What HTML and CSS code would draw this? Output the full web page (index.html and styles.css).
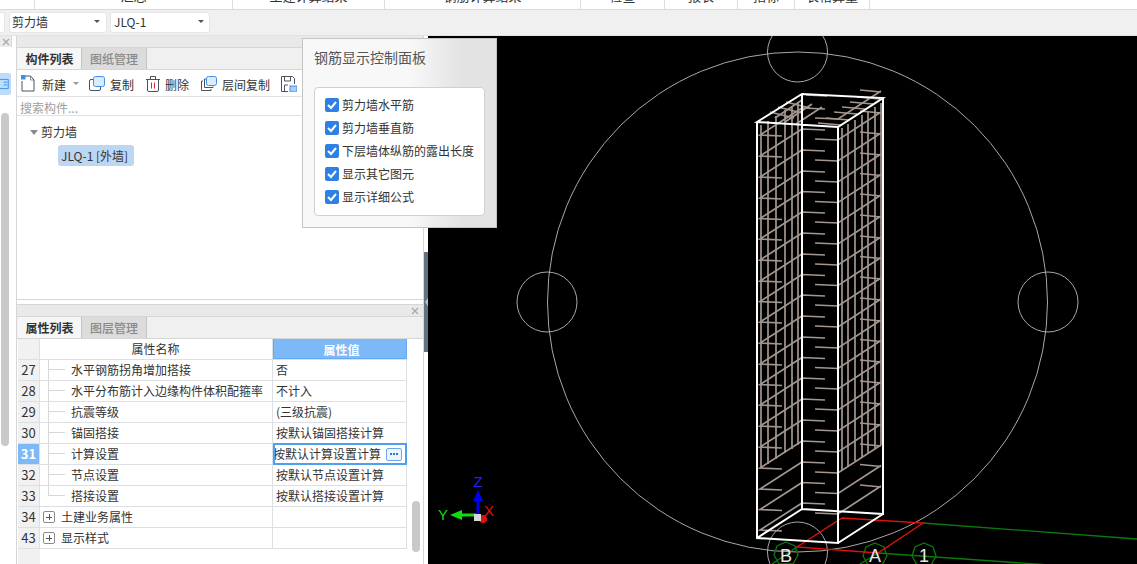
FILE: index.html
```html
<!DOCTYPE html>
<html lang="zh">
<head>
<meta charset="utf-8">
<title>钢筋显示控制面板</title>
<link rel="stylesheet" href="styles.css">
</head>
<body>
<div class="app">
  <div class="ribbon">
    <div class="rb w1"><span>汇总</span></div>
    <div class="rb w2"><span>土建计算结果</span></div>
    <div class="rb w3"><span>钢筋计算结果</span></div>
    <div class="rb w4"><span>检查</span></div>
    <div class="rb w5"><span>报表</span></div>
    <div class="rb w6"><span>指标</span></div>
    <div class="rb w7"><span>表格算量</span></div>
  </div>
  <div class="toolbar">
    <div class="sel sel-stub"></div>
    <div class="sel"><span>剪力墙</span><i class="caret"></i></div>
    <div class="sel"><span>JLQ-1</span><i class="caret"></i></div>
  </div>
  <div class="main">
    <aside class="side">
      <div class="side-head"><svg class="x" viewBox="0 0 8 8"><path d="M1 1l6 6M7 1L1 7"/></svg></div>
      <div class="side-tile"><svg viewBox="0 0 12 14" width="12" height="14"><path d="M-2 2h11v10H-2M4 5h4M4 8h4" fill="none" stroke="#3b8de0"/></svg></div>
      <div class="side-thumb"></div>
    </aside>
    <div class="panels">
      <section class="panel p1">
        <div class="phead"></div>
        <div class="tabs"><div class="tab on">构件列表</div><div class="tab">图纸管理</div></div>
        <div class="tools">
          <div class="tool t-new">
            <svg width="15" height="17" viewBox="0 0 15 17"><path d="M1 6v10h12V5L9.500 1H4" fill="none" stroke="#4a5260"/><path d="M9.500 1v4H13" fill="none" stroke="#4a5260" stroke-width=".6"/><rect x="0" y="0" width="4.500" height="4.500" fill="#3f8fe8"/></svg>
            <span>新建</span><i class="caret gray"></i>
          </div>
          <div class="tool t-copy">
            <svg width="16" height="15" viewBox="0 0 16 15"><rect x="4.500" y=".5" width="11" height="10" rx="2" fill="#dcebfb" stroke="#3f8fe8"/><path d="M4 3.500H2a1.500 1.500 0 0 0-1.500 1.500v8a1.500 1.500 0 0 0 1.500 1.500h8a1.500 1.500 0 0 0 1.500-1.500v-2" fill="none" stroke="#4a5260"/></svg>
            <span>复制</span>
          </div>
          <div class="tool t-del">
            <svg width="14" height="16" viewBox="0 0 14 16"><path d="M0 3.500h14M4.500 3V.5h5V3M1.500 4v10a1.500 1.500 0 0 0 1.500 1.500h8a1.500 1.500 0 0 0 1.500-1.500V4" fill="none" stroke="#4a5260"/><path d="M5.500 6.500v6M8.500 6.500v6" stroke="#d42a2a"/></svg>
            <span>删除</span>
          </div>
          <div class="tool t-layer">
            <svg width="16" height="15" viewBox="0 0 16 15"><rect x="5.500" y=".5" width="10" height="9" rx="2" fill="#dcebfb" stroke="#3f8fe8"/><path d="M5 3H3.500v8.500H12V10.500M2 5H.5v9.500H10V13" fill="none" stroke="#4a5260"/></svg>
            <span>层间复制</span>
          </div>
          <div class="tool">
            <svg width="16" height="16" viewBox="0 0 16 16"><path d="M7 15.500H.5V.5h11l2 2V8" fill="none" stroke="#4a5260"/><path d="M3.500 1v4h6V1M3.500 15V9H7" fill="none" stroke="#4a5260"/><rect x="9" y="10" width="7" height="6" fill="#a9cdf3" stroke="#3f8fe8"/></svg>
          </div>
        </div>
        <div class="search">搜索构件...</div>
        <div class="tree">
          <div class="tree-top"><i class="tri"></i>剪力墙</div>
          <div class="tree-leaf"><span class="pill">JLQ-1 [外墙]</span></div>
        </div>
      </section>
      <section class="panel p2">
        <div class="phead"><svg class="x" viewBox="0 0 8 8"><path d="M1 1l6 6M7 1L1 7"/></svg></div>
        <div class="tabs"><div class="tab on">属性列表</div><div class="tab">图层管理</div></div>
        <div class="tbl-wrap">
          <div class="tbl">
            <div class="row head"><div class="num"></div><div class="name">属性名称</div><div class="val">属性值</div></div>
            <div class="row"><div class="num">27</div><div class="name sub">水平钢筋拐角增加搭接</div><div class="val">否</div></div>
            <div class="row"><div class="num">28</div><div class="name sub">水平分布筋计入边缘构件体积配箍率</div><div class="val">不计入</div></div>
            <div class="row"><div class="num">29</div><div class="name sub">抗震等级</div><div class="val">(三级抗震)</div></div>
            <div class="row"><div class="num">30</div><div class="name sub">锚固搭接</div><div class="val">按默认锚固搭接计算</div></div>
            <div class="row cur"><div class="num">31</div><div class="name sub">计算设置</div><div class="val"><span class="clip"><span>按默认计算设置计算</span></span><b class="more"><i></i><i></i><i></i></b></div></div>
            <div class="row"><div class="num">32</div><div class="name sub">节点设置</div><div class="val">按默认节点设置计算</div></div>
            <div class="row"><div class="num">33</div><div class="name sub last">搭接设置</div><div class="val">按默认搭接设置计算</div></div>
            <div class="row"><div class="num">34</div><div class="name grp"><i class="plus"></i>土建业务属性</div><div class="val"></div></div>
            <div class="row"><div class="num">43</div><div class="name grp"><i class="plus"></i>显示样式</div><div class="val"></div></div>
            <div class="tbl-foot"></div>
          </div>
          <div class="vbar"><div class="vthumb"></div></div>
        </div>
      </section>
    </div>
    <div class="gutter"><div class="grip"><i></i></div></div>
    <div class="view">
      <svg class="cad" width="709" height="528" viewBox="428 36 709 528">
        <defs>
          <g id="lvl">
            <path d="M802 0L825 1M802 0L760 27L782 28M815 10L838 11L881 -17M860 -18L881 -16"/>
          </g>
        </defs>
        <g fill="none" stroke="#a8a8a8" stroke-width="1">
          <circle cx="797.500" cy="302" r="250"/>
          <circle cx="547" cy="302" r="30"/>
          <circle cx="1048" cy="302" r="30"/>
          <circle cx="797.500" cy="52" r="30"/>
          <circle cx="797.500" cy="552" r="30"/>
        </g>
        <g fill="none" stroke="#0b7a0b" stroke-width="1.300">
          <path d="M923 523L1137 539M878 553L1137 571M860 564L878 553M772 564L797 547"/>
          <polygon points="786,542 795,546 798,555 793,564 779,564 774,555 777,546"/>
          <polygon points="875,543 884,547 887,556 882,565 868,565 863,556 866,547"/>
          <polygon points="924,543 933,547 936,556 931,565 917,565 912,556 915,547"/>
        </g>
        <path d="M842 518L923 523L878 553L797 547Z" fill="none" stroke="#e01010" stroke-width="1.300"/>
        <g fill="#e8e8e8" font-family="'Liberation Sans',sans-serif" font-size="18" text-anchor="middle">
          <text x="786" y="562">B</text>
          <text x="875" y="562">A</text>
          <text x="924" y="562">1</text>
        </g>
        <g fill="none" stroke="#a3968e" stroke-width="1.700">
          <path d="M761 125V468M768 121V464M776 116V459M785 110V453M792 106V449M798 103V445"/>
          <path d="M842 128V470M848 124V466M855 120V461M862 115V457M868 111V453M875 107V449M881 103V445"/>
          <use href="#lvl" y="108"/><use href="#lvl" y="129"/><use href="#lvl" y="150"/><use href="#lvl" y="171"/>
          <use href="#lvl" y="191.500"/><use href="#lvl" y="212"/><use href="#lvl" y="233"/><use href="#lvl" y="254"/>
          <use href="#lvl" y="274.500"/><use href="#lvl" y="295"/><use href="#lvl" y="316"/><use href="#lvl" y="337"/>
          <use href="#lvl" y="357.500"/><use href="#lvl" y="378"/><use href="#lvl" y="399"/><use href="#lvl" y="420"/>
          <use href="#lvl" y="441"/><use href="#lvl" y="462"/><use href="#lvl" y="482.500"/><use href="#lvl" y="503"/>
          <path d="M806 95L827 96M857 97L880 99M850 102L873 104M842 107L865 109M834 112L857 114M826 118L849 120M818 123L841 125"/>
          <path d="M775 118L802 100M785 122L812 104M796 124L822 107M770 112L794 118M778 107L802 113M786 102L810 108"/>
        </g>
        <path d="M757 122L802 94L883 98L838 127ZM757 122V538L838 543V127M802 94V509L883 514V98M757 538L802 509M838 543L883 514M802 509L883 514" fill="none" stroke="#fff" stroke-width="2"/>
        <g>
          <path d="M476.500 500H479.500V514H476.500Z" fill="#0000ee"/>
          <path d="M478 490L483 501H473Z" fill="#0000ee"/>
          <path d="M462 513.500H476V516.500H462Z" fill="#10dd10"/>
          <path d="M450 515L462 510V520Z" fill="#10dd10"/>
          <circle cx="483" cy="519" r="4" fill="#e01010"/>
          <rect x="474" y="514" width="7" height="7" fill="#d8d8d8"/>
          <text class="ax" x="478" y="487" fill="#2222ff">Z</text>
          <text class="ax" x="443" y="520" fill="#10dd10">Y</text>
          <text class="ax" x="489" y="516" fill="#e01010">X</text>
        </g>
      </svg>
    </div>
    <div class="float">
      <div class="float-title">钢筋显示控制面板</div>
      <div class="float-box">
        <label class="chk"><i class="box"><svg width="14" height="14" viewBox="0 0 14 14"><path d="M3 7l3 3 5-6" fill="none" stroke="#fff" stroke-width="2"/></svg></i>剪力墙水平筋</label>
        <label class="chk"><i class="box"><svg width="14" height="14" viewBox="0 0 14 14"><path d="M3 7l3 3 5-6" fill="none" stroke="#fff" stroke-width="2"/></svg></i>剪力墙垂直筋</label>
        <label class="chk"><i class="box"><svg width="14" height="14" viewBox="0 0 14 14"><path d="M3 7l3 3 5-6" fill="none" stroke="#fff" stroke-width="2"/></svg></i>下层墙体纵筋的露出长度</label>
        <label class="chk"><i class="box"><svg width="14" height="14" viewBox="0 0 14 14"><path d="M3 7l3 3 5-6" fill="none" stroke="#fff" stroke-width="2"/></svg></i>显示其它图元</label>
        <label class="chk"><i class="box"><svg width="14" height="14" viewBox="0 0 14 14"><path d="M3 7l3 3 5-6" fill="none" stroke="#fff" stroke-width="2"/></svg></i>显示详细公式</label>
      </div>
    </div>
  </div>
</div>
</body>
</html>
```

FILE: styles.css
```css
* { box-sizing: border-box; }
html, body { margin: 0; height: 100%; overflow: hidden; }
body {
  font-family: "Noto Sans CJK SC", "Liberation Sans", sans-serif;
  font-size: 12px;
  color: #333;
  background: #fff;
}
i, b { font-style: normal; font-weight: normal; }
.app { width: 1137px; height: 564px; display: flex; flex-direction: column; overflow: hidden; }

.ribbon { height: 10px; flex: none; display: flex; padding-left: 34px; background: #fff; border-bottom: 1px solid #d9d9d9; overflow: hidden; }
.rb { border-left: 1px solid #dedede; height: 9px; text-align: center; overflow: hidden; }
.rb span { display: block; margin-top: -11px; line-height: 14px; font-size: 13px; }
.w1 { width: 198px; } .w2 { width: 152px; } .w3 { width: 196px; } .w4 { width: 84px; }
.w5 { width: 73px; } .w6 { width: 57px; } .w7 { width: 76px; border-right: 1px solid #dedede; }

.toolbar { height: 26px; flex: none; display: flex; gap: 3px; align-items: flex-start; padding: 2px 0 0 0; background: #f0f0f0; border-bottom: 1px solid #e2e2e2; }
.sel { width: 98px; height: 21px; background: #fff; border: 1px solid #e6e6e6; border-radius: 3px; display: flex; align-items: center; justify-content: space-between; padding: 0 6px 2px 2px; }
.sel:nth-child(2) { margin-left: 1px; }
.sel:nth-child(3) { width: 100px; padding-right: 5px; padding-left: 3px; }
.sel-stub { width: 5px; padding: 0; border-left: 0; border-radius: 0 3px 3px 0; }
.sel span { line-height: 19px; }
.caret { width: 0; height: 0; border: 3px solid transparent; border-top: 3px solid #555; border-bottom: 0; }
.caret.gray { border-top-color: #999; }

.main { flex: 1; display: flex; position: relative; min-height: 0; }
.side { width: 17px; flex: none; background: #fff; border-right: 1px solid #d6d6d6; position: relative; }
.side-head { width: 12px; height: 11px; background: #ebebeb; border-right: 1px solid #d6d6d6; display: flex; align-items: center; justify-content: center; }
.side-tile { width: 11px; height: 22px; margin-top: 26px; background: #bcdcfa; border-radius: 0 3px 3px 0; display: flex; align-items: center; overflow: hidden; }
.side-thumb { width: 8px; height: 333px; margin: 18px 0 0 1px; background: #c9c9c9; border-radius: 4px; }
.x { width: 8px; height: 8px; fill: none; stroke: #a8a8a8; stroke-width: 1.200; }

.panels { width: 407px; flex: none; display: flex; flex-direction: column; gap: 4px; border-right: 1px solid #d6d6d6; }
.panel { display: flex; flex-direction: column; background: #fff; }
.p1 { height: 264px; border-bottom: 1px solid #d6d6d6; }
.p2 { flex: 1; min-height: 0; border-top: 1px solid #d6d6d6; }
.phead { height: 11px; flex: none; background: #e9e9e9; display: flex; align-items: center; justify-content: flex-end; padding-right: 4px; }
.tabs { height: 23px; flex: none; display: flex; background: #f0f0f0; border-top: 1px solid #d6d6d6; border-bottom: 1px solid #d6d6d6; padding-left: 1px; }
.tab { width: 65px; text-align: center; line-height: 21px; color: #8a8a8a; background: #dcdcdc; border-right: 1px solid #c4c4c4; font-weight: 500; }
.tab.on { background: #f6f6f6; color: #333; font-weight: 700; width: 64px; }

.tools { height: 27px; flex: none; display: flex; align-items: center; padding: 1px 0 0 4px; border-bottom: 1px solid #e2e2e2; }
.tool { display: flex; align-items: center; gap: 5px; }
.tool span { padding-top: 1px; }
.t-new { width: 68px; gap: 6px; } .t-new .caret { margin-left: 1px; }
.t-copy { width: 57px; } .t-del { width: 55px; } .t-layer { width: 80px; }
.search { height: 19px; flex: none; line-height: 21px; padding-left: 3px; color: #a0a0a0; border-bottom: 1px solid #e2e2e2; }
.tree { padding: 6px 0 0 13px; }
.tree-top { height: 20px; line-height: 20px; display: flex; align-items: center; gap: 4px; font-size: 12px; }
.tri { width: 0; height: 0; border: 4px solid transparent; border-top: 5px solid #888; border-bottom: 0; margin-right: -1px; }
.tree-leaf { margin: 3px 0 0 28px; }
.pill { display: inline-block; height: 21px; width: 76px; line-height: 21px; background: #bcd7f3; border-radius: 3px; padding-left: 3px; white-space: nowrap; font-size: 12px; }

.tbl-wrap { flex: 1; min-height: 0; display: flex; }
.tbl { width: 390px; flex: none; display: flex; flex-direction: column; padding-left: 1px; }
.row { height: 21px; flex: none; display: grid; grid-template-columns: 22px 233px 134px; border-bottom: 1px solid #dcdfe3; }
.row > div { line-height: 20px; border-right: 1px solid #dcdfe3; white-space: nowrap; overflow: hidden; }
.num { background: #f1f1f1; text-align: center; font-size: 13px; }
.name { padding-left: 31px; position: relative; }
.name.sub::before { content: ""; position: absolute; left: 8px; top: -1px; bottom: -1px; width: 16px; border-left: 1px solid #d8d8d8; background: linear-gradient(#d8d8d8, #d8d8d8) left 10px / 100% 1px no-repeat; }
.name.sub.last::before { bottom: 10px; }
.name.grp { padding-left: 21px; }
.val { padding-left: 3px; }
.head .name { text-align: center; padding-left: 2px; padding-right: 3px; }
.head .val { background: #7db8f7; color: #fff; text-align: center; font-weight: 700; border: 1px solid #64a8f2; border-top: 0; line-height: 21px; }
.cur .num { background: #7db8f7; color: #fff; font-weight: 700; }
.cur .val { border: 2px solid #4d9ff0; display: flex; align-items: center; padding: 0 2px 0 0; margin: -1px 0 -1px 0; height: 22px; }
.clip { width: 106px; overflow: hidden; display: block; direction: rtl; flex: none; }
.clip span { direction: ltr; unicode-bidi: bidi-override; }
.more { width: 16px; height: 13px; margin-left: 5px; border: 1px solid #6aa9ee; border-radius: 2px; background: #eef5fd; display: flex; flex: none; align-items: center; justify-content: center; gap: 1px; }
.more i { width: 2px; height: 2px; background: #2a78d6; }
.plus { position: absolute; left: 3px; top: 4px; width: 12px; height: 12px; border: 1px solid #8a8a8a; border-radius: 2px; background: linear-gradient(#555, #555) center / 6px 1px no-repeat, linear-gradient(#555, #555) center / 1px 6px no-repeat; }
.tbl-foot { flex: 1; width: 22px; background: #f1f1f1; }
.vbar { flex: 1; padding: 162px 0 0 5px; }
.vthumb { width: 8px; height: 51px; background: #c9c9c9; border-radius: 4px; }

.gutter { width: 4px; flex: none; background: #fff; padding-top: 216px; }
.grip { width: 4px; height: 100px; background: #65727f; position: relative; }
.grip i { position: absolute; left: 1px; top: 46px; border: 4px solid transparent; border-right: 3px solid #b9c1c8; border-left: 0; }
.view { flex: 1; background: #000; min-width: 0; overflow: hidden; }
.cad { display: block; }
.ax { font: 15px "Liberation Sans", sans-serif; text-anchor: middle; }

.float { position: absolute; left: 302px; top: 2px; width: 195px; height: 190px; border: 1px solid #c4c4c4; padding: 8px 12px 0 11px; background: linear-gradient(90deg, #f8f8f8 55%, #e3e3e3 82%); }
.float-title { font-size: 14px; line-height: 20px; color: #555; }
.float-box { margin-top: 20px; width: 171px; height: 129px; background: #fff; border: 1px solid #d0d0d0; border-radius: 4px; padding: 8px 0 0 10px; display: flex; flex-direction: column; gap: 6px; }
.chk { height: 17px; display: flex; align-items: center; gap: 3px; white-space: nowrap; }
.box { width: 14px; height: 14px; flex: none; background: #2f80e4; border-radius: 2px; display: block; }
.box svg { display: block; }
```
